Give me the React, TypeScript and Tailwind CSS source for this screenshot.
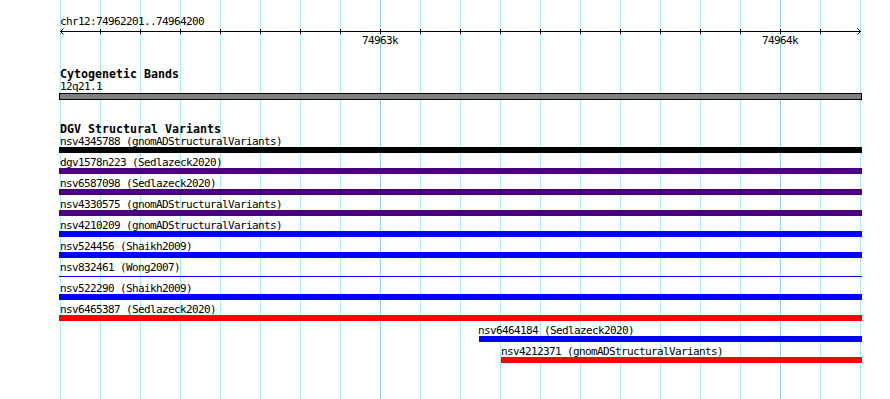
import React from 'react';

// --- Track data ---
// x positions are pixels on the 890px wide panel (view spans x 59..862)
const variants = [
  { name: "nsv4345788", source: "gnomADStructuralVariants", color: "bg-[#000000]", start: 59, textX: 60, thin: false },
  { name: "dgv1578n223", source: "Sedlazeck2020", color: "bg-[#4b0082]", start: 59, textX: 60, thin: false },
  { name: "nsv6587098", source: "Sedlazeck2020", color: "bg-[#4b0082]", start: 59, textX: 60, thin: false },
  { name: "nsv4330575", source: "gnomADStructuralVariants", color: "bg-[#4b0082]", start: 59, textX: 60, thin: false },
  { name: "nsv4210209", source: "gnomADStructuralVariants", color: "bg-[#0000ff]", start: 59, textX: 60, thin: false },
  { name: "nsv524456", source: "Shaikh2009", color: "bg-[#0000ff]", start: 59, textX: 60, thin: false },
  { name: "nsv832461", source: "Wong2007", color: "bg-[#0000ff]", start: 59, textX: 60, thin: true },
  { name: "nsv522290", source: "Shaikh2009", color: "bg-[#0000ff]", start: 59, textX: 60, thin: false },
  { name: "nsv6465387", source: "Sedlazeck2020", color: "bg-[#ff0000]", start: 59, textX: 60, thin: false },
  { name: "nsv6464184", source: "Sedlazeck2020", color: "bg-[#0000ff]", start: 479, textX: 478, thin: false },
  { name: "nsv4212371", source: "gnomADStructuralVariants", color: "bg-[#ff0000]", start: 501, textX: 501, thin: false },
];

const VIEW_END = 862;

// grid lines every 40px from x=60 to x=860, major ones at the kb marks
const gridLines = Array.from({ length: 21 }, (_, i) => 60 + i * 40);
const majorLines = [380, 780];

function Ruler() {
  const ticks = gridLines.slice(1, -1);
  return (
    <svg width={890} height={8} className="block" shapeRendering="crispEdges">
      <line x1={60} y1={4.5} x2={861} y2={4.5} stroke="#000" strokeWidth={1} />
      {ticks.map((x) => (
        <line key={x} x1={x + 0.5} y1={2} x2={x + 0.5} y2={7} stroke="#000" strokeWidth={1} />
      ))}
      {/* arrow heads */}
      <polyline points="63.5,1.5 60.5,4.5 63.5,7.5" fill="none" stroke="#000" strokeWidth={1} shapeRendering="auto" />
      <polyline points="857.5,1.5 860.5,4.5 857.5,7.5" fill="none" stroke="#000" strokeWidth={1} shapeRendering="auto" />
    </svg>
  );
}

// small label font: 6px per character like the gd bitmap font
const small = "h-[11px] text-[11px] leading-[11px] tracking-[-0.62px] whitespace-pre";

export default function App() {
  return (
    <div className="relative w-[890px] h-[399px] bg-white overflow-hidden text-black font-['DejaVu_Sans_Mono','Liberation_Mono',monospace]">

      {/* --- GRID BACKGROUND --- */}
      <div className="absolute inset-y-0 left-[60px] flex gap-[39px]">
        {gridLines.map((x) => (
          <div
            key={x}
            className={majorLines.includes(x) ? "w-px h-full bg-[#87cefa]" : "w-px h-full bg-[#a8ecf0]"}
          />
        ))}
      </div>

      {/* --- CONTENT --- */}
      <div className="relative flex flex-col pt-[16px]">

        {/* Position / ruler */}
        <div className={`pl-[60px] ${small}`}>chr12:74962201..74964200</div>
        <Ruler />
        <div className={`flex pl-[362px] gap-[364px] ${small}`}>
          <span className="w-[36px]">74963k</span>
          <span className="w-[36px]">74964k</span>
        </div>

        {/* Cytogenetic bands */}
        <div className="mt-[22px] pl-[60px] h-[12px] text-[11.63px] leading-[12px] font-bold whitespace-pre">Cytogenetic Bands</div>
        <div className={`mt-[1px] pl-[60px] ${small}`}>12q21.1</div>
        <div className="mt-[1px] ml-[59px] w-[803px] h-[7px] bg-[#808080] border border-black" />

        {/* DGV structural variants */}
        <div className="mt-[23px] pl-[60px] h-[12px] text-[11.63px] leading-[12px] font-bold whitespace-pre">DGV Structural Variants</div>
        <div className="mt-[1px] flex flex-col gap-[4px]">
          {variants.map((v) => (
            <div key={v.name} className="flex flex-col">
              <div className={small} style={{ paddingLeft: v.textX }}>
                {v.name} ({v.source})
              </div>
              <div className="h-[6px] flex flex-col justify-center" style={{ marginLeft: v.start, width: VIEW_END - v.start }}>
                <div className={v.thin ? `h-px ${v.color}` : `h-[6px] ${v.color}`} />
              </div>
            </div>
          ))}
        </div>

      </div>
    </div>
  );
}
